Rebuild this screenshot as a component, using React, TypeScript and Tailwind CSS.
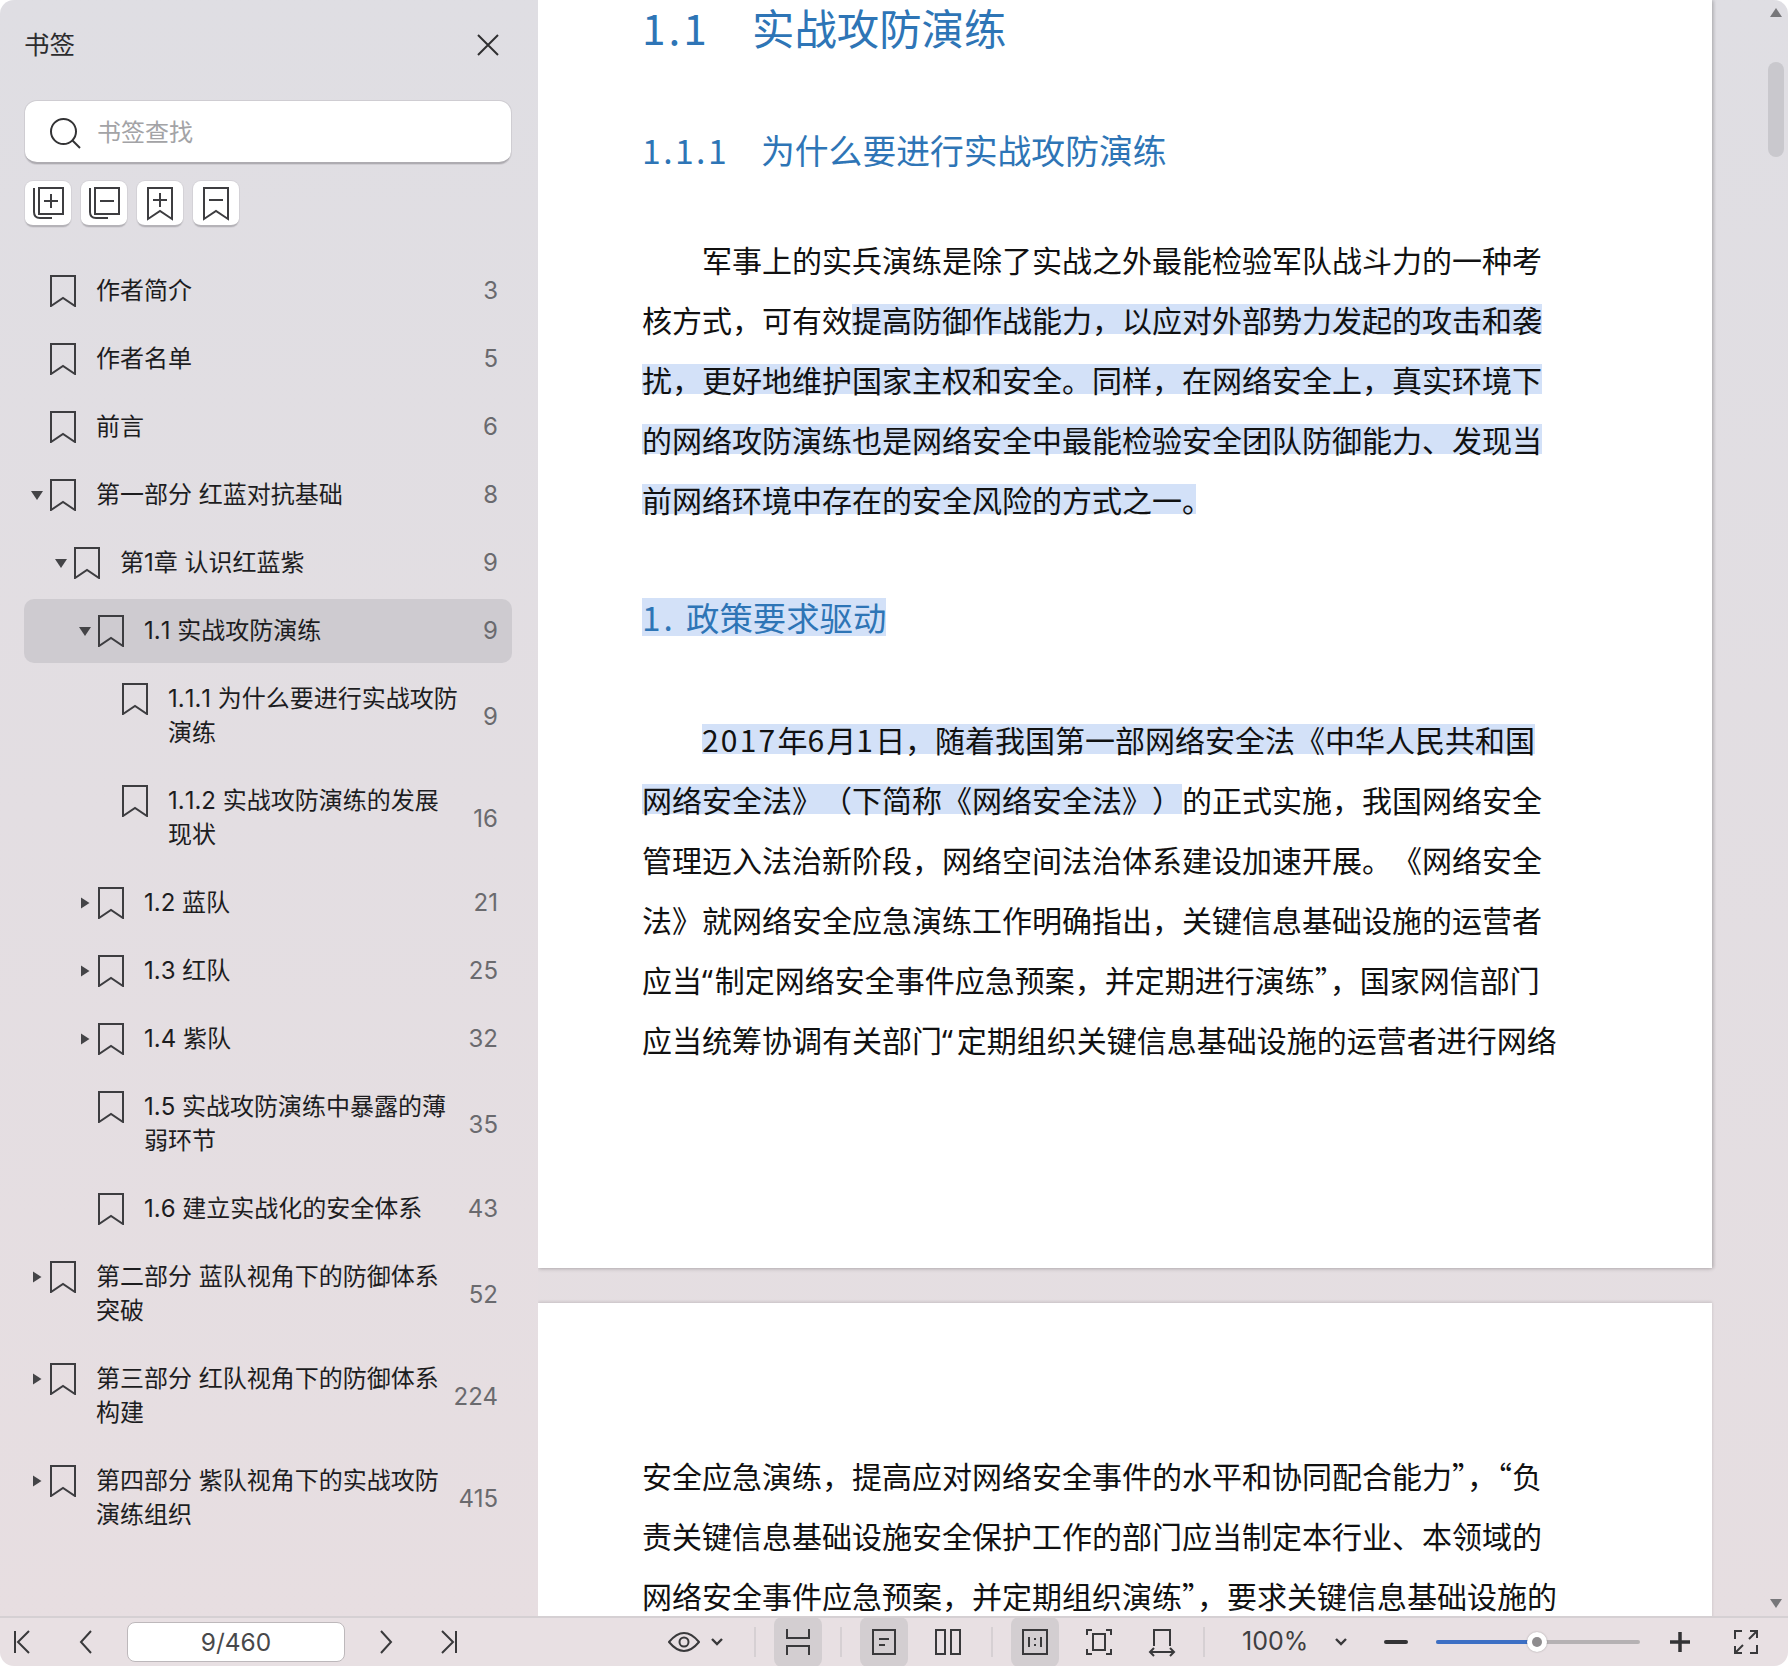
import type { ReactNode } from 'react'

const uiFont = '[font-family:"Inter","Noto_Sans_CJK_SC",sans-serif]'
const cjkFont = '[font-family:"Noto_Sans_CJK_SC",sans-serif]'

type Item = {
  lines: string[]
  page: number
  level: number
  arrow?: 'open' | 'closed'
  active?: boolean
}

const items: Item[] = [
  { lines: ['作者简介'], page: 3, level: 0 },
  { lines: ['作者名单'], page: 5, level: 0 },
  { lines: ['前言'], page: 6, level: 0 },
  { lines: ['第一部分 红蓝对抗基础'], page: 8, level: 0, arrow: 'open' },
  { lines: ['第1章 认识红蓝紫'], page: 9, level: 1, arrow: 'open' },
  { lines: ['1.1 实战攻防演练'], page: 9, level: 2, arrow: 'open', active: true },
  { lines: ['1.1.1 为什么要进行实战攻防', '演练'], page: 9, level: 3 },
  { lines: ['1.1.2 实战攻防演练的发展', '现状'], page: 16, level: 3 },
  { lines: ['1.2 蓝队'], page: 21, level: 2, arrow: 'closed' },
  { lines: ['1.3 红队'], page: 25, level: 2, arrow: 'closed' },
  { lines: ['1.4 紫队'], page: 32, level: 2, arrow: 'closed' },
  { lines: ['1.5 实战攻防演练中暴露的薄', '弱环节'], page: 35, level: 2 },
  { lines: ['1.6 建立实战化的安全体系'], page: 43, level: 2 },
  { lines: ['第二部分 蓝队视角下的防御体系', '突破'], page: 52, level: 0, arrow: 'closed' },
  { lines: ['第三部分 红队视角下的防御体系', '构建'], page: 224, level: 0, arrow: 'closed' },
  { lines: ['第四部分 紫队视角下的实战攻防', '演练组织'], page: 415, level: 0, arrow: 'closed' },
]

function Bookmark() {
  return (
    <svg width="26" height="32" viewBox="0 0 26 32" fill="none" stroke="#3d3d40" strokeWidth="2" className="shrink-0">
      <path d="M1 1H25V31L13 23L1 31Z" />
    </svg>
  )
}

function Arrow({ dir }: { dir?: 'open' | 'closed' }) {
  if (!dir) return <span className="w-[14px] shrink-0" />
  return (
    <svg width="14" height="14" viewBox="0 0 14 14" fill="#444447" className="shrink-0">
      {dir === 'open' ? <path d="M1 3H13L7 12Z" /> : <path d="M3 1.5L11.5 7L3 12.5Z" />}
    </svg>
  )
}

// indent per nesting level is 24px
const indent = ['pl-[6px]', 'pl-[30px]', 'pl-[54px]', 'pl-[78px]']

function Row({ item }: { item: Item }) {
  return (
    <div
      className={`flex items-center rounded-[10px] py-[15px] pr-[14px] ${indent[item.level]} ${
        item.active ? 'bg-[#cecbd0]' : ''
      }`}
    >
      <div className="flex flex-1 items-start">
        <div className="flex h-[34px] items-center gap-[6px]">
          <Arrow dir={item.arrow} />
          <Bookmark />
        </div>
        <div className="ml-[20px] text-[24px] leading-[34px] text-[#1d1d1f] [font-kerning:none]">
          {item.lines.map((l) => (
            <div key={l} className="whitespace-nowrap">{l}</div>
          ))}
        </div>
      </div>
      <span className={`text-[24px] leading-[34px] text-[#6a6a6e] ${item.lines.length > 1 ? 'pt-[1px]' : ''}`}>
        {item.page}
      </span>
    </div>
  )
}

function ToolBtn({ kind }: { kind: number }) {
  return (
    <div className="flex h-[46px] w-[46px] items-center justify-center rounded-[8px] border-b-2 border-[#b5b3b8] bg-white shadow-[0_0_0_1px_#d4d2d7]">
      <svg width="34" height="36" viewBox="0 0 34 36" fill="none" stroke="#3d3d40" strokeWidth="2">
        {kind === 0 && (
          <>
            <path d="M8 3H32V29H8Z" />
            <path d="M3 3V27Q3 33 9 33H21" />
            <path d="M20 9V23M13 16H27" />
          </>
        )}
        {kind === 1 && (
          <>
            <path d="M8 3H32V29H8Z" />
            <path d="M3 3V27Q3 33 9 33H21" />
            <path d="M13 16H27" />
          </>
        )}
        {kind === 2 && (
          <>
            <path d="M5 3H29V34L17 26L5 34Z" />
            <path d="M17 8V22M10 15H24" />
          </>
        )}
        {kind === 3 && (
          <>
            <path d="M5 3H29V34L17 26L5 34Z" />
            <path d="M10 15H24" />
          </>
        )}
      </svg>
    </div>
  )
}

function Sidebar() {
  return (
    <aside className={`h-full w-[538px] shrink-0 bg-gradient-to-b from-[#dfdee3] to-[#e7dee1] ${uiFont}`}>
      <div className="flex items-center justify-between pl-[24px] pr-[39px] pt-[27px]">
        <span className="text-[25.5px] leading-[36px] text-[#2c2c2e]">书签</span>
        <svg width="22" height="22" viewBox="0 0 22 22" fill="none" stroke="#2f2f31" strokeWidth="2">
          <path d="M1 1L21 21M21 1L1 21" />
        </svg>
      </div>
      <div className="ml-[25px] mr-[27px] mt-[38px] flex h-[63px] items-center rounded-[12px] border-b-2 border-[#aeacb1] bg-white pl-[25px] pt-[2px] shadow-[0_0_0_1px_#cfcdd2]">
        <svg width="32" height="32" viewBox="0 0 32 32" fill="none" stroke="#333335" strokeWidth="2" className="-ml-[1px]">
          <circle cx="14.5" cy="14.5" r="12.5" />
          <path d="M23.5 23.5L31 31" />
        </svg>
        <span className="ml-[16px] text-[24px] leading-[36px] text-[#a3a3a6]">书签查找</span>
      </div>
      <div className="mx-[25px] mt-[17px] flex gap-[10px]">
        {[0, 1, 2, 3].map((k) => (
          <ToolBtn key={k} kind={k} />
        ))}
      </div>
      <div className="ml-[24px] mr-[26px] mt-[32px] flex flex-col gap-[4px]">
        {items.map((it) => (
          <Row key={it.lines[0]} item={it} />
        ))}
      </div>
    </aside>
  )
}

function Mark({ children }: { children: ReactNode }) {
  return <span className="inline-block h-[30px] bg-[#d3e1f8] leading-[30px]">{children}</span>
}

// the opening quote in the PDF is narrow, not a full-width one
function Quote({ gap }: { gap: string }) {
  return <span className={`[font-family:"Noto_Sans",sans-serif] ${gap}`}>“</span>
}

function Line({ children, className }: { children: ReactNode; className?: string }) {
  return (
    <div className={`h-[60px] whitespace-nowrap text-[30px] leading-[60px] text-[#111] ${className ?? ''}`}>
      {children}
    </div>
  )
}

function Pages() {
  return (
    <main className={`relative min-w-0 flex-1 overflow-hidden bg-gradient-to-b from-[#dfdee3] to-[#e6dee1] ${cjkFont}`}>
      <section className="h-[1268px] w-[1174px] bg-white pl-[104px] shadow-[0_1px_4px_rgba(0,0,0,0.18),2px_0_3px_rgba(0,0,0,0.12)]">
        <div className="flex h-[54px] items-center text-[42.4px] leading-[54px] text-[#2e75b6]">
          <span className="w-[110px] tracking-[3px]">1.1</span>
          <span>实战攻防演练</span>
        </div>
        <div className="mt-[66px] flex h-[60px] items-center text-[33.8px] text-[#2e75b6]">
          <span className="w-[119px] tracking-[2.4px]">1.1.1</span>
          <span>为什么要进行实战攻防演练</span>
        </div>
        <div className="mt-[49px]">
          <Line className="pl-[60px]">军事上的实兵演练是除了实战之外最能检验军队战斗力的一种考</Line>
          <Line>核方式，可有效<Mark>提高防御作战能力，以应对外部势力发起的攻击和袭</Mark></Line>
          <Line><Mark>扰，更好地维护国家主权和安全。同样，在网络安全上，真实环境下</Mark></Line>
          <Line><Mark>的网络攻防演练也是网络安全中最能检验安全团队防御能力、发现当</Mark></Line>
          <Line><Mark>前网络环境中存在的安全风险的方式之一<span className="tracking-[-16px]">。</span></Mark></Line>
        </div>
        <div className="mt-[58px] flex h-[60px] items-center text-[33.4px] text-[#2e75b6]">
          <span className="inline-flex h-[38px] items-center bg-[#d3e1f8] leading-[38px]">
            <span className="w-[44px] tracking-[3px]">1.</span>政策要求驱动
          </span>
        </div>
        <div className="mt-[62px] [text-spacing-trim:space-all]">
          <Line className="pl-[60px]"><Mark><span className="tracking-[2.2px]">2017</span>年<span className="tracking-[2.2px]">6</span>月<span className="tracking-[2.2px]">1</span>日，随着我国第一部网络安全法《中华人民共和国</Mark></Line>
          <Line><Mark>网络安全法》（下简称《网络安全法》）</Mark>的正式实施，我国网络安全</Line>
          <Line>管理迈入法治新阶段，网络空间法治体系建设加速开展。《网络安全</Line>
          <Line>法》就网络安全应急演练工作明确指出，关键信息基础设施的运营者</Line>
          <Line className="[text-spacing-trim:normal]">应当<Quote gap="pr-[2px]" />制定网络安全事件应急预案，并定期进行演练”，国家网信部门</Line>
          <Line>应当统筹协调有关部门<Quote gap="pr-[4px]" />定期组织关键信息基础设施的运营者进行网络</Line>
        </div>
      </section>
      <section className="mt-[35px] h-[400px] w-[1174px] bg-white pl-[104px] pt-[142px] shadow-[0_-1px_3px_rgba(0,0,0,0.14)]">
        <Line>安全应急演练，提高应对网络安全事件的水平和协同配合能力”，“负</Line>
        <Line>责关键信息基础设施安全保护工作的部门应当制定本行业、本领域的</Line>
        <Line className="mt-[15px] !h-[30px] !leading-[30px]">网络安全事件应急预案，并定期组织演练”，要求关键信息基础设施的</Line>
      </section>
      {/* scrollbar floats over the page gutter */}
      <div className="absolute right-[4px] top-[4px] flex h-[1608px] w-[16px] flex-col items-center">
        <svg width="12" height="9" viewBox="0 0 12 9" fill="#77777a" className="mt-[4px]">
          <path d="M6 0L12 9H0Z" />
        </svg>
        <div className="mt-[45px] h-[95px] w-[16px] rounded-[8px] bg-[#c9c8cd]" />
        <svg width="12" height="9" viewBox="0 0 12 9" fill="#77777a" className="mt-auto mb-[4px]">
          <path d="M0 0H12L6 9Z" />
        </svg>
      </div>
    </main>
  )
}

const stroke = { fill: 'none', stroke: '#39393b', strokeWidth: 2 }

function Nav({ d }: { d: string }) {
  return (
    <svg width="18" height="24" viewBox="0 0 18 24" {...stroke}>
      <path d={d} />
    </svg>
  )
}

function Divider() {
  return <div className="h-[30px] w-[2px] bg-[#d6d0d3]" />
}

function Bar({ children, active, className }: { children: ReactNode; active?: boolean; className?: string }) {
  return (
    <div className={`flex h-[50px] w-[48px] shrink-0 items-center justify-center rounded-[8px] ${active ? 'bg-[#d3ced1]' : ''} ${className ?? ''}`}>
      {children}
    </div>
  )
}

function Ico({ children }: { children: ReactNode }) {
  return (
    <svg width="28" height="30" viewBox="0 0 28 30" {...stroke}>
      {children}
    </svg>
  )
}

function Caret() {
  return (
    <svg width="12" height="8" viewBox="0 0 12 8" fill="none" stroke="#39393b" strokeWidth="2.4">
      <path d="M1 1L6 6L11 1" />
    </svg>
  )
}

function Toolbar() {
  return (
    <footer className={`flex h-[50px] shrink-0 items-center border-t-2 border-[#d5d0d3] bg-[#e8e0e3] ${uiFont}`}>
      <div className="ml-[13px] flex w-[114px] items-center justify-between pr-[32px]">
        <Nav d="M2 1V23M16 1L5 12L16 23" />
        <Nav d="M14 1L4 12L14 23" />
      </div>
      <div className="flex h-[40px] w-[218px] items-center justify-center rounded-[8px] border border-[#bdb8bb] bg-white text-[24.5px] text-[#48484a]">
        9/460
      </div>
      <div className="ml-[32px] flex w-[81px] items-center justify-between">
        <Nav d="M4 1L14 12L4 23" />
        <Nav d="M2 1L13 12L2 23M16 1V23" />
      </div>
      <div className="ml-[210px] flex items-center gap-[11px]">
        <svg width="32" height="22" viewBox="0 0 32 22" {...stroke}>
          <path d="M1 11Q16 -7 31 11Q16 29 1 11Z" />
          <circle cx="16" cy="11" r="4.5" />
        </svg>
        <Caret />
      </div>
      <div className="ml-[31px]"><Divider /></div>
      <Bar active className="ml-[18px]">
        <Ico>
          <path d="M3 2V11H25V2M3 28V19H25V28" />
        </Ico>
      </Bar>
      <div className="ml-[18px]"><Divider /></div>
      <Bar active className="ml-[18px]">
        <Ico>
          <path d="M3 3H25V27H3Z" />
          <path d="M9 12H19M9 18H15" />
        </Ico>
      </Bar>
      <Bar className="ml-[16px]">
        <Ico>
          <path d="M2 3H11V27H2ZM17 3H26V27H17Z" />
        </Ico>
      </Bar>
      <div className="ml-[19px]"><Divider /></div>
      <Bar active className="ml-[18px]">
        <Ico>
          <path d="M2 3H26V27H2Z" />
          <path d="M8 10V20M14 11V13M14 17V19M20 10V20" />
        </Ico>
      </Bar>
      <Bar className="ml-[16px]">
        <Ico>
          <path d="M2 8V3H7M21 3H26V8M2 22V27H7M21 27H26V22" />
          <path d="M8 7H20V23H8Z" />
        </Ico>
      </Bar>
      <Bar className="ml-[15px]">
        <Ico>
          <path d="M6 19V3H22V19" />
          <path d="M2 25H26M6 21L2 25L6 29M22 21L26 25L22 29" />
        </Ico>
      </Bar>
      <div className="ml-[17px]"><Divider /></div>
      <span className="ml-[37px] w-[68px] whitespace-nowrap text-[25px] text-[#3f3f41]">100%</span>
      <div className="ml-[25px]"><Caret /></div>
      <div className="ml-[37px] h-[3.5px] w-[24px] rounded-full bg-[#333335]" />
      <div className="relative ml-[28px] h-[4px] w-[204px] rounded-full bg-[#b5b1b3]">
        <div className="h-full w-[100px] rounded-full bg-[#3c6fc4]" />
        <div className="absolute left-[91px] top-[-8px] flex h-[20px] w-[20px] items-center justify-center rounded-full bg-white shadow-[0_0_2px_rgba(0,0,0,0.3)]">
          <div className="h-[10px] w-[10px] rounded-full bg-[#8e8c8e]" />
        </div>
      </div>
      <svg width="20" height="20" viewBox="0 0 20 20" fill="none" stroke="#333335" strokeWidth="3.5" className="ml-[30px]">
        <path d="M10 0V20M0 10H20" />
      </svg>
      <svg width="28" height="28" viewBox="0 0 28 28" {...stroke} className="ml-[42px]">
        <path d="M3 11V3H10M18 25H25V17M17 11L25 3M18 3H25V10M11 17L3 25M3 18V25H10" />
      </svg>
    </footer>
  )
}

export default function App() {
  return (
    <div className="h-[1666px] w-[1788px] overflow-hidden bg-white">
      <div className="flex h-full flex-col overflow-hidden rounded-[14px]">
        <div className="flex min-h-0 flex-1">
          <Sidebar />
          <Pages />
        </div>
        <Toolbar />
      </div>
    </div>
  )
}
